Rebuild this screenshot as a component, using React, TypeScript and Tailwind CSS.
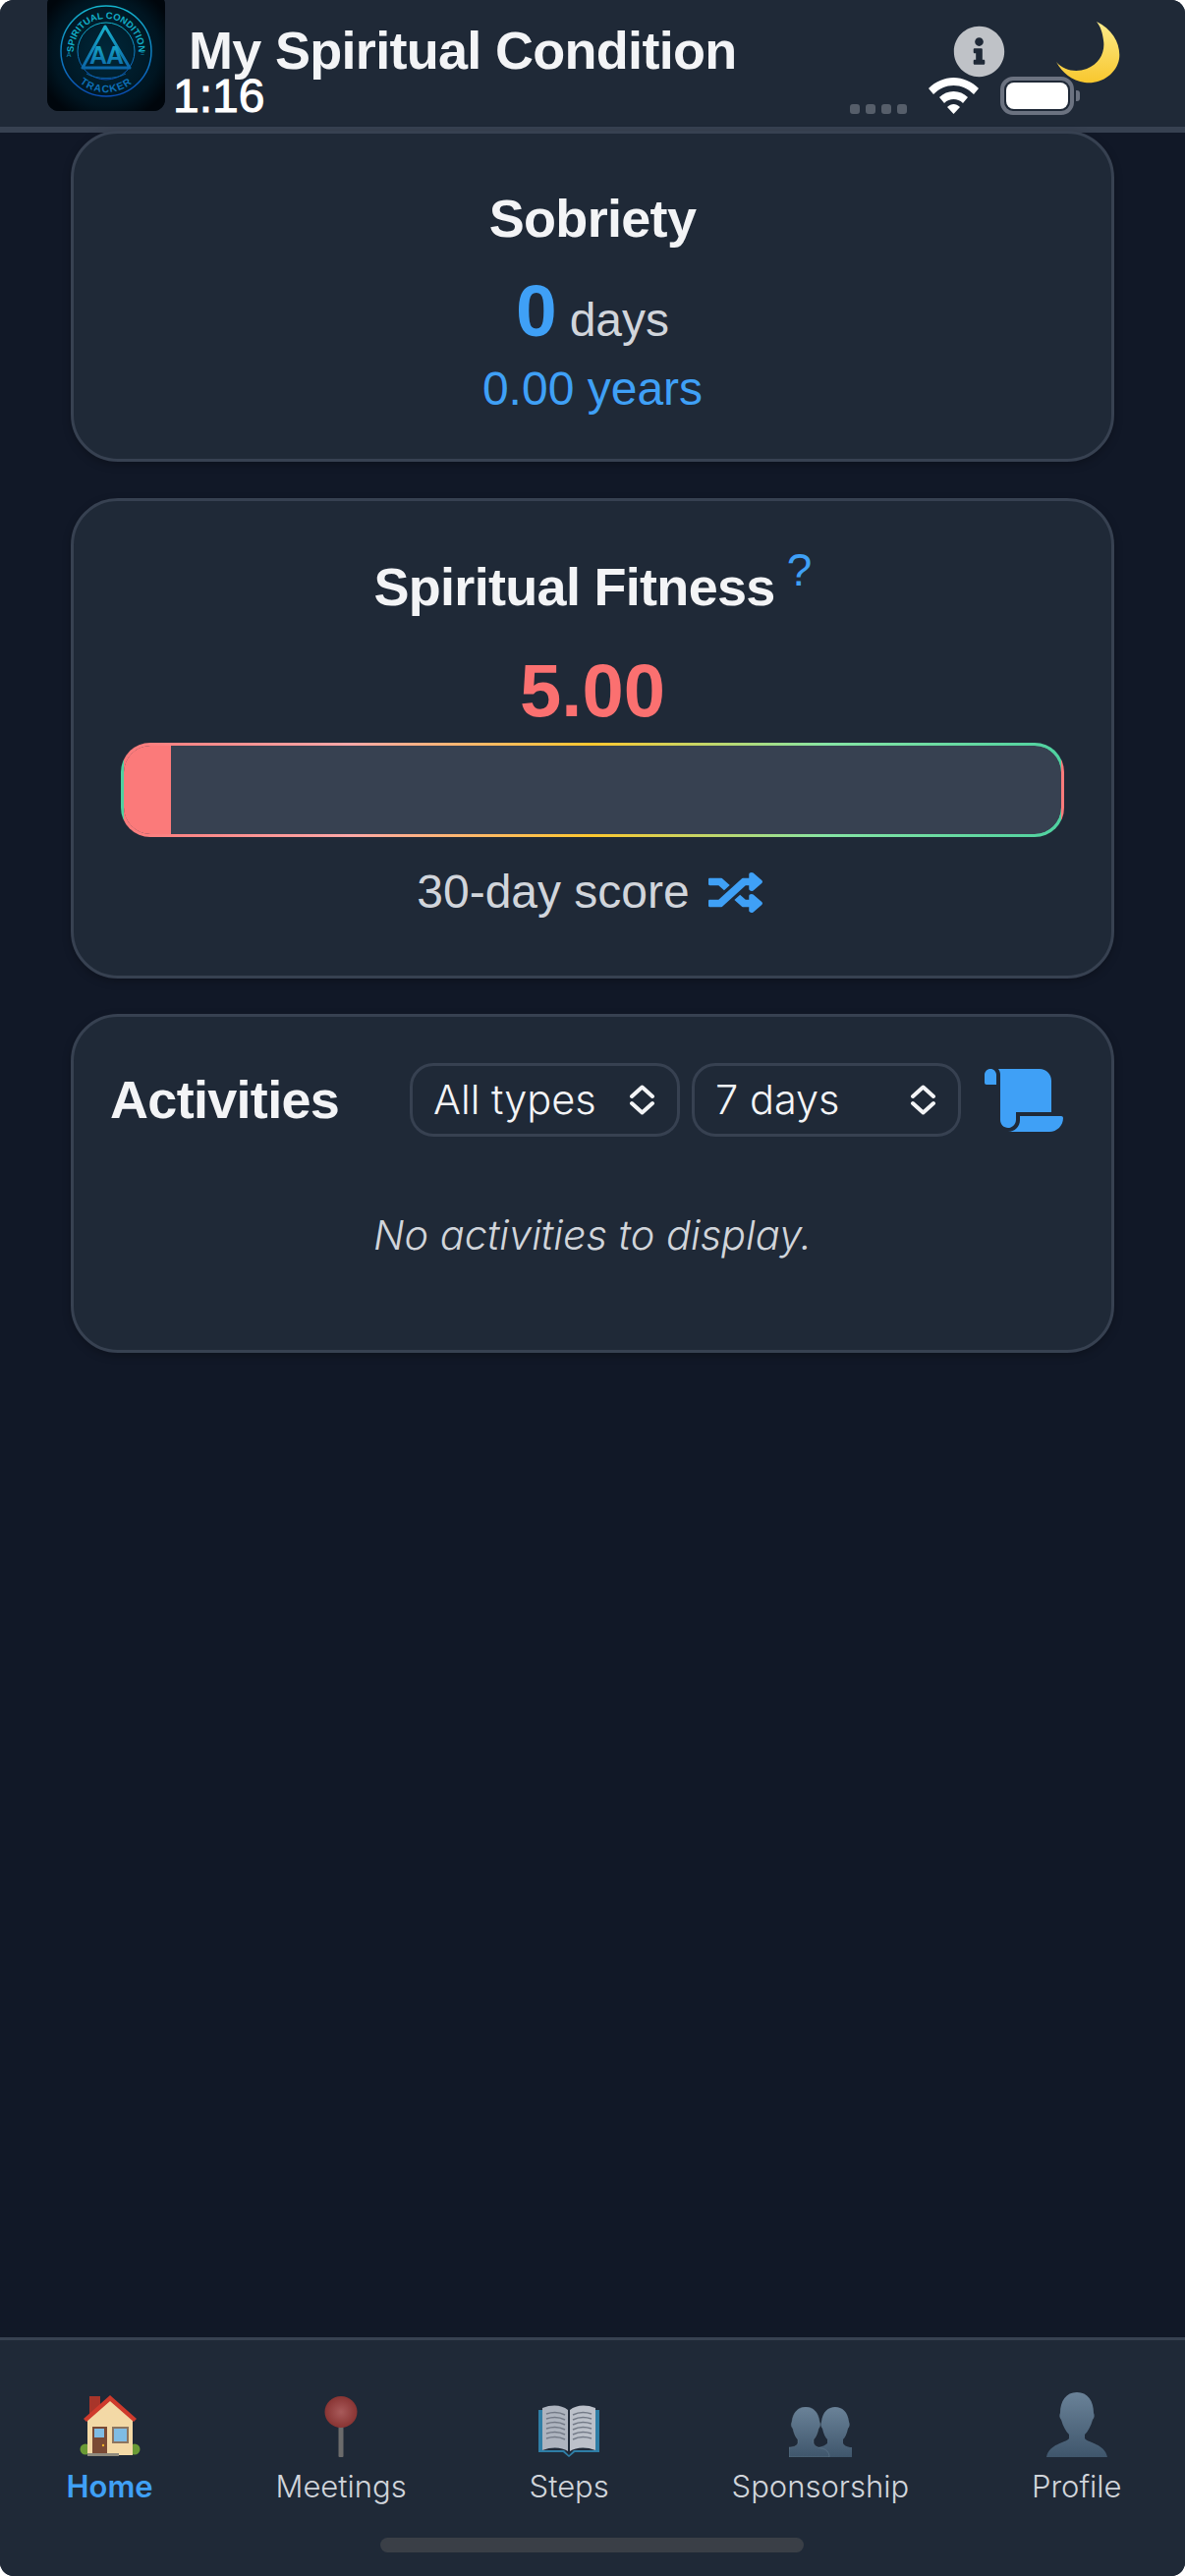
import { FaInfoCircle, FaRandom, FaScroll } from 'react-icons/fa'

const sans = "font-['Liberation_Sans',Arial,sans-serif]"
const inter = "font-['Inter',sans-serif]"

function Logo() {
  return (
    <svg viewBox="0 0 120 120" className="h-[120px] w-[120px]">
      <defs>
        <radialGradient id="glow" cx="0.5" cy="0.5" r="0.6">
          <stop offset="0" stopColor="#00283a" />
          <stop offset="0.75" stopColor="#001521" />
          <stop offset="1" stopColor="#00060c" />
        </radialGradient>
        <linearGradient id="ring" x1="0" y1="0" x2="0" y2="1">
          <stop offset="0" stopColor="#14b4cc" />
          <stop offset="1" stopColor="#0a4db5" />
        </linearGradient>
        <linearGradient id="tri" x1="0" y1="0" x2="0" y2="1">
          <stop offset="0" stopColor="#18b0cb" />
          <stop offset="1" stopColor="#0c66a8" />
        </linearGradient>
        <path id="arcTop" d="M 29 70.3 A 33 33 0 1 1 91 70.3" fill="none" />
        <path id="arcBottom" d="M 18 59 A 42 42 0 0 0 102 59" fill="none" />
      </defs>
      <rect width="120" height="120" fill="url(#glow)" />
      <circle cx="60" cy="59" r="46" fill="none" stroke="url(#ring)" strokeWidth="1.5" />
      <circle cx="60" cy="59" r="29" fill="none" stroke="url(#ring)" strokeWidth="1" />
      <text fontSize="9.5" fontWeight="700" fill="#12adc6" fontFamily="Liberation Sans, sans-serif">
        <textPath href="#arcTop" startOffset="50%" textAnchor="middle">SPIRITUAL CONDITION</textPath>
      </text>
      <text fontSize="10.5" fontWeight="700" letterSpacing="1" fill="#0d6fb5" fontFamily="Liberation Sans, sans-serif">
        <textPath href="#arcBottom" startOffset="50%" textAnchor="middle">TRACKER</textPath>
      </text>
      <text x="22" y="65" textAnchor="middle" fontSize="7" fill="#0f86ad" fontFamily="Liberation Sans, sans-serif">A</text>
      <text x="97" y="64" textAnchor="middle" fontSize="7" fill="#0f86ad" fontFamily="Liberation Sans, sans-serif">=</text>
      <path d="M59 34 L36 76 H84 Z" fill="none" stroke="url(#tri)" strokeWidth="3" strokeLinejoin="round" />
      <text x="60" y="72" textAnchor="middle" fontSize="25" fontWeight="700" letterSpacing="-1" fill="url(#tri)" fontFamily="Liberation Sans, sans-serif">AA</text>
      <path d="M40 82 C50 88 70 88 80 82" fill="none" stroke="#0b5f9e" strokeWidth="1" />
    </svg>
  )
}

function Moon() {
  return (
    <svg viewBox="0 0 65 63" className="h-[63px] w-[65px]">
      <defs>
        <linearGradient id="moon" x1="0" y1="0" x2="0" y2="1">
          <stop offset="0" stopColor="#fdeb8a" />
          <stop offset="1" stopColor="#f8c72e" />
        </linearGradient>
      </defs>
      <path d="M41 0 C58 8 66 24 64 38 C61 54 45 64 29 62 C16 60 6 52 0 41 C8 50 20 52 31 48 C44 43 50 31 48 19 C47 11 45 5 41 0 Z" fill="url(#moon)" />
    </svg>
  )
}

function Wifi() {
  return (
    <svg viewBox="0 0 51 37" className="h-[37px] w-[51px]" fill="white">
      <path d="M25.5 0 C35 0 44 4 51 11 L46 17 C40 11 33 8 25.5 8 C18 8 11 11 5 17 L0 11 C7 4 16 0 25.5 0 Z" />
      <path d="M25.5 14 C31 14 36 16 40 20 L35 26 C32 23 29 22 25.5 22 C22 22 19 23 16 26 L11 20 C15 16 20 14 25.5 14 Z" />
      <path d="M25.5 27 C27.5 27 30 28 32 30 L25.5 37 L19 30 C21 28 23.5 27 25.5 27 Z" />
    </svg>
  )
}

function Updown() {
  return (
    <svg viewBox="0 0 27 31" className="h-[31px] w-[27px] shrink-0" fill="none" stroke="#f3f4f6" strokeWidth="4" strokeLinecap="round" strokeLinejoin="round">
      <path d="M3 12 L13.5 2.5 L24 12" />
      <path d="M3 19 L13.5 28.5 L24 19" />
    </svg>
  )
}

function House() {
  return (
    <svg viewBox="0 0 62 64" className="h-[64px] w-[62px]">
      <circle cx="6" cy="56" r="5.5" fill="#6a9a35" />
      <circle cx="56" cy="56" r="5.5" fill="#6a9a35" />
      <rect x="10" y="2" width="11" height="20" fill="#a8352a" />
      <path d="M8 26 L31 6 L54 26 V62 H8 Z" fill="#f3d9a6" />
      <path d="M4 25 L31 1 L58 25 L55 28 L31 7 L7 28 Z" fill="#cf3a2c" />
      <rect x="13" y="33" width="15" height="29" fill="#7a4a35" />
      <rect x="15" y="35" width="10" height="9" fill="#7fbce4" />
      <rect x="33" y="33" width="17" height="17" fill="#8c7560" />
      <rect x="35" y="35" width="13" height="13" fill="#7fbce4" />
      <circle cx="24" cy="52" r="1.2" fill="#f0b429" />
      <rect x="8" y="60" width="32" height="3" fill="#8f8a7e" />
    </svg>
  )
}

function Pin() {
  return (
    <svg viewBox="0 0 34 62" className="h-[62px] w-[34px]">
      <defs>
        <radialGradient id="pin" cx="0.5" cy="0.5" r="0.55">
          <stop offset="0" stopColor="#a85a5a" />
          <stop offset="1" stopColor="#85302f" />
        </radialGradient>
      </defs>
      <rect x="14.5" y="30" width="5" height="32" rx="1" fill="#6b6b6b" />
      <ellipse cx="17" cy="16" rx="16.5" ry="16" fill="url(#pin)" />
    </svg>
  )
}

function Book() {
  return (
    <svg viewBox="0 0 62 54" className="h-[54px] w-[62px]">
      <path d="M0 6 H4 V47 H26 L31 52 L36 47 H58 V6 H62 V49 H37 L31 54 L25 49 H0 Z" fill="#2f7ea6" />
      <path d="M4 4 C14 0 24 1 30 6 V48 C24 44 14 43 4 47 Z" fill="#aeb4bf" />
      <path d="M58 4 C48 0 38 1 32 6 V48 C38 44 48 43 58 47 Z" fill="#bcc1ca" />
      <path d="M8 10 C14 8 21 8 27 11 M8 15 C14 13 21 13 27 16 M8 20 C14 18 21 18 27 21 M8 25 C14 23 21 23 27 26 M8 30 C14 28 21 28 27 31 M8 35 C14 33 21 33 27 36 M54 10 C48 8 41 8 35 11 M54 15 C48 13 41 13 35 16 M54 20 C48 18 41 18 35 21 M54 25 C48 23 41 23 35 26 M54 30 C48 28 41 28 35 31 M54 35 C48 33 41 33 35 36" stroke="#737a87" strokeWidth="1.6" fill="none" />
    </svg>
  )
}

const bustPath = 'M32 0 C21 0 15 9 15 21 C14 23 14 26 16 28 C18 35 21 40 24 43 V47 C20 52 4 52 1 66 H63 C60 52 44 52 40 47 V43 C43 40 46 35 48 28 C50 26 50 23 49 21 C49 9 43 0 32 0 Z'

function Bust() {
  return (
    <svg viewBox="0 0 64 66" className="h-[66px] w-[66px]">
      <defs>
        <linearGradient id="bust" x1="0" y1="0" x2="0" y2="1">
          <stop offset="0" stopColor="#6a8298" />
          <stop offset="1" stopColor="#3f566c" />
        </linearGradient>
      </defs>
      <path d={bustPath} fill="url(#bust)" />
    </svg>
  )
}

function Busts() {
  return (
    <svg viewBox="0 0 64 51" className="h-[51px] w-[64px]">
      <defs>
        <linearGradient id="busts" x1="0" y1="0" x2="0" y2="1">
          <stop offset="0" stopColor="#6a8298" />
          <stop offset="1" stopColor="#3f566c" />
        </linearGradient>
      </defs>
      <path d="M47 0 C40 0 34 5 33 15 C32 17 32 20 34 22 C35 27 37 31 39 33 V37 C37 39 34 40 30 41 V51 H64 V41 H62 C58 40 56 39 55 37 V33 C57 31 59 27 60 22 C62 20 62 17 61 15 C60 5 54 0 47 0 Z" fill="url(#busts)" />
      <path d="M17 0 C10 0 4 5 3 15 C2 17 2 20 4 22 C5 27 7 31 9 33 V37 C8 40 4 41 0 41 V51 H41 C41 46 38 43 33 42 C29 41 26 40 25 37 V33 C27 31 29 27 30 22 C32 20 32 17 31 15 C30 5 24 0 17 0 Z" fill="url(#busts)" stroke="#70889b" strokeWidth="0.4" />
    </svg>
  )
}

const navItems = [
  { label: 'Home', icon: <House />, active: true },
  { label: 'Meetings', icon: <Pin />, active: false },
  { label: 'Steps', icon: <Book />, active: false },
  { label: 'Sponsorship', icon: <Busts />, active: false },
  { label: 'Profile', icon: <Bust />, active: false },
]

function Card({ className, children }: { className: string; children: React.ReactNode }) {
  return (
    <section className={`mx-[72px] rounded-[48px] border-[3px] border-[#374151] bg-[#1f2937] shadow-[0_3px_9px_rgba(0,0,0,0.25)] ${className}`}>
      {children}
    </section>
  )
}

function Select({ label, className }: { label: string; className: string }) {
  return (
    <div className={`flex h-[75px] items-center justify-between rounded-[24px] border-[3px] border-[#374151] pr-[22px] pl-[21px] ${className}`}>
      <span className={`${inter} text-[41.5px] leading-none font-light text-[#f3f4f6]`}>{label}</span>
      <Updown />
    </div>
  )
}

export default function App() {
  return (
    <div className="bg-white">
      <div className={`relative flex h-[2622px] flex-col overflow-hidden rounded-[14px] bg-[#111827] ${sans}`}>
        <header className="relative z-10 flex h-[135px] shrink-0 items-start border-b-[6px] border-[#374151] bg-[#1f2937] pl-[48px]">
          <div className="-mt-[7px] h-[120px] w-[120px] shrink-0 overflow-hidden rounded-[12px] bg-[#00080f]">
            <Logo />
          </div>
          <h1 className="mt-[23px] ml-[24px] text-[54px] leading-[56px] font-bold tracking-[-0.7px] text-[#f3f4f6]">My Spiritual Condition</h1>
          <FaInfoCircle className="absolute top-[26px] left-[970px] h-[53px] w-[53px] text-[#bfc2c7]" />
          <div className="absolute top-[22px] left-[1075px]"><Moon /></div>
          {/* status bar painted over the app header */}
          <span className="absolute top-[74px] left-[176px] text-[48px] leading-[48px] text-white [-webkit-text-stroke:1px_white]">1:16</span>
          <div className="absolute top-[106px] left-[865px] flex gap-[6px]">
            <i className="h-[10px] w-[10px] rounded-[3px] bg-[#565e6a]" />
            <i className="h-[10px] w-[10px] rounded-[3px] bg-[#565e6a]" />
            <i className="h-[10px] w-[10px] rounded-[3px] bg-[#565e6a]" />
            <i className="h-[10px] w-[10px] rounded-[3px] bg-[#565e6a]" />
          </div>
          <div className="absolute top-[79px] left-[945px]"><Wifi /></div>
          <div className="absolute top-[78px] left-[1018px] flex items-center gap-[2px]">
            <div className="h-[39px] w-[75px] rounded-[13px] border-[4px] border-[#6b7280] p-[2px]">
              <div className="h-full w-full rounded-[8px] bg-white" />
            </div>
            <div className="h-[11px] w-[4px] rounded-r-[3px] bg-[#6b7280]" />
          </div>
        </header>

        <main className="-mt-[2px] flex flex-1 flex-col">
          <Card className="relative z-20 mb-[37px] h-[337px] pt-[55px] text-center">
            <h2 className="text-[54px] leading-[62px] font-bold tracking-[-0.7px] text-[#f3f4f6]">Sobriety</h2>
            <p className="mt-[20px] leading-[86px]">
              <span className="text-[75px] font-bold text-[#3fa0f6]">0</span>
              <span className="ml-[13px] text-[48px] text-[#d1d5db]">days</span>
            </p>
            <p className="-mt-[11px] text-[48px] leading-[54px] text-[#3fa0f6]">0.00 years</p>
          </Card>

          <Card className="mb-[36px] h-[489px] pt-[56px]">
            <h2 className="text-center text-[54px] leading-[62px] font-bold tracking-[-0.7px] text-[#f3f4f6]">
              Spiritual Fitness
              <span className="relative -top-[20px] ml-[12px] text-[46px] leading-none font-normal text-[#3fa0f6]">?</span>
            </h2>
            <p className="mt-[32px] text-center text-[76px] leading-[86px] font-bold text-[#fb7070]">5.00</p>
            <div className="mx-[48px] mt-[10px] h-[96px] overflow-hidden rounded-[30px] border-[3px] border-transparent bg-[linear-gradient(90deg,#fb7a7a,#ffa8a8_24%,#fdc82f_50%,#86e5a5_75%,#4fd1a0)]">
              <div className="h-full overflow-hidden rounded-[27px] bg-[#374151]">
                <div className="h-full w-[5%] bg-[#fb7a7a]" />
              </div>
            </div>
            <div className="mt-[28px] flex items-center justify-center gap-[19px] pr-[6px]">
              <span className="text-[48px] leading-[56px] text-[#d1d5db]">30-day score</span>
              <FaRandom preserveAspectRatio="none" className="h-[47px] w-[55px] text-[#3fa0f6]" />
            </div>
          </Card>

          <Card className="h-[345px] px-[37px] pt-[47px]">
            <div className="flex items-center">
              <h2 className="w-[233px] shrink-0 text-[54px] leading-[75px] font-bold tracking-[-0.7px] whitespace-nowrap text-[#f3f4f6]">Activities</h2>
              <Select label="All types" className="ml-[72px] w-[275px]" />
              <Select label="7 days" className="ml-[12px] w-[274px]" />
              <FaScroll className="ml-[23px] h-[64px] w-[82px] text-[#3fa0f6]" />
            </div>
            <p className={`${inter} mt-[76px] text-center text-[41.5px] leading-[48px] font-light text-[#d1d5db] italic`}>No activities to display.</p>
          </Card>
        </main>

        <nav className="relative flex h-[243px] shrink-0 items-start justify-around border-t-[3px] border-[#374151] bg-[#1f2937] pt-[53px] pr-[2px] pl-[5px]">
          {navItems.map((item) => (
            <div key={item.label} className="flex flex-col items-center">
              <div className="flex h-[66px] items-end">{item.icon}</div>
              <span className={`${inter} mt-[10px] text-[31px] leading-[40px] ${item.active ? 'font-semibold text-[#3fa0f6]' : 'font-light text-[#d1d5db]'}`}>
                {item.label}
              </span>
            </div>
          ))}
          <div className="absolute bottom-[24px] left-[387px] h-[15px] w-[431px] rounded-full bg-[#3a3f47]" />
        </nav>
      </div>
    </div>
  )
}
